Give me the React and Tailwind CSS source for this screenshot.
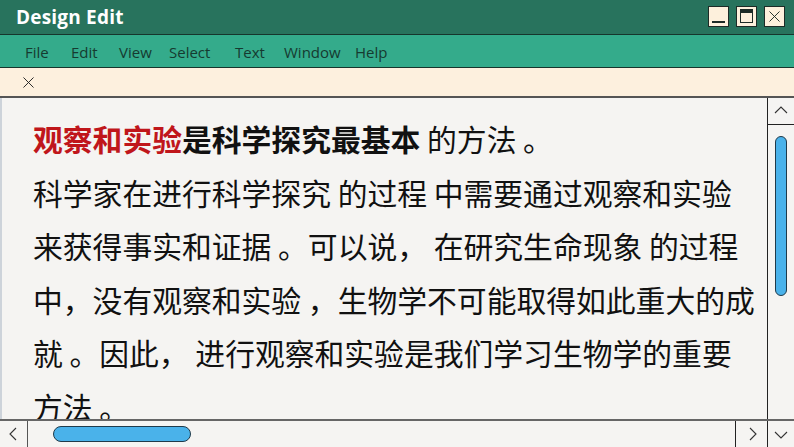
import { X } from 'lucide-react';

const MENU = [
  { label: 'File', w: 'w-[46px]' },
  { label: 'Edit', w: 'w-[48px]' },
  { label: 'View', w: 'w-[50px]' },
  { label: 'Select', w: 'w-[66px]' },
  { label: 'Text', w: 'w-[49px]' },
  { label: 'Window', w: 'w-[71px]' },
  { label: 'Help', w: 'w-[40px]' },
];

const LINES = [
  '科学家在进行科学探究 的过程 中需要通过观察和实验',
  '来获得事实和证据 。可以说， 在研究生命现象 的过程',
  '中，没有观察和实验 ，生物学不可能取得如此重大的成',
  '就 。因此， 进行观察和实验是我们学习生物学的重要',
  '方法 。',
];

function WinButton({ children }) {
  return (
    <div className="w-[21px] h-[21px] bg-[#fdf0dc] border border-[#1d2b26] flex items-center justify-center">
      {children}
    </div>
  );
}

function Chevron({ d }) {
  return (
    <svg width="16" height="16" viewBox="0 0 16 16" fill="none" stroke="#333" strokeWidth="1.1">
      <path d={d} />
    </svg>
  );
}

export default function App() {
  return (
    <div className="w-[794px] h-[447px] flex flex-col overflow-hidden bg-[#f5f4f2]" style={{ fontFamily: '"Open Sans", "Noto Sans CJK SC", sans-serif' }}>
      {/* Title bar */}
      <div className="h-[35px] shrink-0 bg-[#28735d] flex items-center justify-between pl-4 pr-[9px] border-b border-[#17352c]">
        <span className="text-white font-bold text-[19px] tracking-[0.2px]">Design Edit</span>
        <div className="flex gap-[7px] -mt-[2px]">
          <WinButton>
            <div className="w-[13px] h-[2px] bg-[#1d2b26] mt-[11px]" />
          </WinButton>
          <WinButton>
            <div className="w-[13px] h-[14px] border border-[#1d2b26] border-t-[4px]" />
          </WinButton>
          <WinButton>
            <X size={19} stroke="#1d2b26" strokeWidth={1.2} />
          </WinButton>
        </div>
      </div>

      {/* Menu bar */}
      <div className="h-[33px] shrink-0 bg-[#34ab8b] flex items-center pl-[25px] pt-[3px] border-b border-[#17352c] text-[15px] text-[#163a30]">
        {MENU.map((m) => (
          <span key={m.label} className={m.w}>{m.label}</span>
        ))}
      </div>

      {/* Tab bar */}
      <div className="h-[30px] shrink-0 bg-[#fdf0de] flex items-center pl-[19px] border-b-2 border-[#555]">
        <X size={19} stroke="#222" strokeWidth={1.2} />
      </div>

      {/* Content */}
      <div className="flex-1 flex min-h-0">
        <div
          className="flex-1 overflow-hidden pl-[31px] pt-[14px] text-[29.8px] leading-[53.5px] text-[#111] border-l-2 border-[#cdd3da] whitespace-nowrap"
          style={{ fontFamily: '"Noto Sans CJK SC", sans-serif' }}
        >
          <div>
            <span className="font-bold text-[#c0161b]">观察和实验</span>
            <span className="font-bold">是科学探究最基本</span> 的方法 。
          </div>
          {LINES.map((l, i) => (
            <div key={i}>{l}</div>
          ))}
        </div>

        {/* Vertical scrollbar */}
        <div className="w-[27px] shrink-0 border-l border-[#222] flex flex-col items-center">
          <div className="h-[27px] w-full border-b border-[#222] flex items-center justify-center">
            <Chevron d="M2 10 L8 4 L14 10" />
          </div>
          <div className="mt-[11px] w-[12px] h-[160px] rounded-full bg-[#4ab2ea] border border-[#1f3a4a]" />
        </div>
      </div>

      {/* Horizontal scrollbar */}
      <div className="h-[28px] shrink-0 flex border-t-2 border-[#666]">
        <div className="w-[28px] border-r border-[#555] flex items-center justify-center">
          <Chevron d="M10 2 L4 8 L10 14" />
        </div>
        <div className="flex-1 flex items-center pl-[25px]">
          <div className="w-[138px] h-[16px] rounded-full bg-[#4ab2ea] border border-[#1f3a4a]" />
        </div>
        <div className="w-[32px] border-l border-[#222] flex items-center justify-center">
          <Chevron d="M6 2 L12 8 L6 14" />
        </div>
        <div className="w-[27px] border-l border-[#222] flex items-center justify-center">
          <Chevron d="M2 6 L8 12 L14 6" />
        </div>
      </div>
    </div>
  );
}
